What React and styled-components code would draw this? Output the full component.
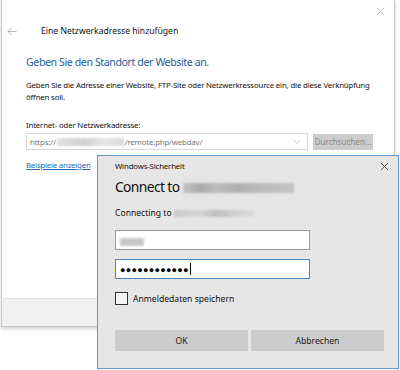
import styled, { createGlobalStyle } from "styled-components";

const Global = createGlobalStyle`
  html, body {
    margin: 0;
    padding: 0;
    background: #ffffff;
  }
  body {
    width: 400px;
    height: 370px;
    overflow: hidden;
    font-family: "Noto Sans", "Open Sans", sans-serif;
    color: #1a1a1a;
  }
`;

const Desktop = styled.div`
  position: relative;
  width: 400px;
  height: 370px;
  background: #ffffff;
`;

const Wizard = styled.div`
  position: absolute;
  left: 1px;
  top: -1px;
  width: 392px;
  height: 326px;
  background: #ffffff;
  border: 1px solid #c8c8c8;
  box-shadow: 0 2px 4px rgba(0, 0, 0, 0.18);
  display: flex;
  flex-direction: column;
`;

const WizardHead = styled.div`
  display: flex;
  align-items: center;
  height: 20px;
  padding: 21px 0 0 5px;
  gap: 24px;
  font-size: 8.6px;
  color: #111;
`;

const CloseX = styled.div`
  position: absolute;
  right: ${(p) => p.$right}px;
  top: ${(p) => p.$top}px;
  width: 10px;
  height: 10px;
  color: ${(p) => p.$color};
  svg { display: block; }
`;

const WizardBody = styled.div`
  flex: 1;
  padding: 0 0 0 24px;
  display: flex;
  flex-direction: column;
`;

const Heading = styled.div`
  margin-top: 14px;
  font-size: 10.6px;
  letter-spacing: -0.4px;
  color: #1f5c9e;
`;

const Desc = styled.div`
  margin-top: 11px;
  font-size: 7.8px;
  letter-spacing: -0.15px;
  line-height: 11.5px;
  white-space: nowrap;
  color: #111;
`;

const FieldLabel = styled.div`
  margin-top: 17px;
  font-size: 7.8px;
  letter-spacing: -0.15px;
  color: #111;
`;

const AddrRow = styled.div`
  margin-top: 3px;
  display: flex;
  gap: 5px;
  align-items: center;
`;

const AddrBox = styled.div`
  width: 277px;
  height: 15px;
  border: 1px solid #d6d6d6;
  display: flex;
  align-items: center;
  padding-left: 3px;
  font-size: 7.8px;
  letter-spacing: -0.15px;
  color: #777;
  position: relative;
`;

const Blur = styled.span`
  display: inline-block;
  flex: none;
  width: ${(p) => p.$w}px;
  height: ${(p) => p.$h}px;
  background: ${(p) => p.$bg};
  filter: blur(0.8px);
  margin: ${(p) => p.$m || "0"};
`;

const Chevron = styled.span`
  position: absolute;
  right: 6px;
  top: 5px;
  svg { display: block; }
`;

const Browse = styled.div`
  width: 60px;
  height: 16px;
  background: #cccccc;
  color: #8a8a8a;
  font-size: 8.1px;
  display: flex;
  align-items: center;
  justify-content: center;
`;

const Link = styled.div`
  margin-top: 10px;
  font-size: 7.8px;
  letter-spacing: -0.2px;
  color: #2a6ab0;
  text-decoration: underline;
`;

const WizardFoot = styled.div`
  height: 27px;
  background: #f0f0f0;
  border-top: 1px solid #e4e4e4;
`;

const Security = styled.div`
  position: absolute;
  left: 97px;
  top: 155px;
  width: 302px;
  height: 214px;
  box-sizing: border-box;
  background: #e6e6e6;
  border: 1px solid #5b9bd0;
  padding: 0 0 0 17px;
  display: flex;
  flex-direction: column;
`;

const SecTitle = styled.div`
  margin-top: 5px;
  font-size: 7.8px;
  letter-spacing: -0.15px;
  color: #111;
`;

const Connect = styled.div`
  margin-top: 6px;
  display: flex;
  align-items: center;
  font-size: 13.8px;
  letter-spacing: -0.6px;
  color: #111;
`;

const Connecting = styled.div`
  margin-top: 11px;
  display: flex;
  align-items: center;
  font-size: 8.6px;
  color: #111;
`;

const Input = styled.div`
  margin-top: ${(p) => p.$mt}px;
  width: 195px;
  height: 20px;
  box-sizing: border-box;
  background: #ffffff;
  border: 1px solid ${(p) => (p.$focus ? "#4a85bd" : "#9a9a9a")};
  display: flex;
  align-items: center;
  padding-left: 4px;
`;

const Dots = styled.span`
  font-size: 9px;
  letter-spacing: 0.3px;
  color: #000;
  line-height: 1;
`;

const Caret = styled.span`
  width: 1px;
  height: 12px;
  background: #000;
  margin-left: 1px;
`;

const CheckRow = styled.div`
  margin-top: 13px;
  display: flex;
  align-items: center;
  gap: 5px;
  font-size: 8.6px;
  color: #111;
`;

const Box = styled.span`
  width: 13px;
  height: 13px;
  box-sizing: border-box;
  border: 1px solid #333;
  background: #f4f4f4;
`;

const Buttons = styled.div`
  margin-top: 25px;
  display: flex;
  gap: 3px;
`;

const Button = styled.div`
  width: 133px;
  height: 21px;
  background: #cccccc;
  font-size: 8.6px;
  color: #222;
  display: flex;
  align-items: center;
  justify-content: center;
`;

const X = ({ size = 9, stroke = 1 }) => (
  <svg width={size} height={size} viewBox="0 0 10 10">
    <path d="M1 1 L9 9 M9 1 L1 9" stroke="currentColor" strokeWidth={stroke} fill="none" />
  </svg>
);

export default function App() {
  return (
    <Desktop>
      <Global />
      <Wizard>
        <CloseX $right={8} $top={7} $color="#b5b5b5">
          <X size={9} stroke={0.9} />
        </CloseX>
        <WizardHead>
          <svg width="10" height="9" viewBox="0 0 10 9">
            <path d="M9.5 4.5 H1 M4.5 1 L1 4.5 L4.5 8" stroke="#b0b0b0" strokeWidth="0.9" fill="none" />
          </svg>
          <span>Eine Netzwerkadresse hinzufügen</span>
        </WizardHead>
        <WizardBody>
          <Heading>Geben Sie den Standort der Website an.</Heading>
          <Desc>
            Geben Sie die Adresse einer Website, FTP-Site oder Netzwerkressource ein, die diese Verknüpfung
            <br />
            öffnen soll.
          </Desc>
          <FieldLabel>Internet- oder Netzwerkadresse:</FieldLabel>
          <AddrRow>
            <AddrBox>
              https://
              <Blur $w={67} $h={8} $bg="linear-gradient(90deg,#e2e2e2,#d0d0d0 40%,#e6e6e6 70%,#d8d8d8)" $m="0 1px" />
              /remote.php/webdav/
              <Chevron>
                <svg width="8" height="6" viewBox="0 0 8 6">
                  <path d="M1 1.5 L4 4.5 L7 1.5" stroke="#b8b8b8" strokeWidth="0.9" fill="none" />
                </svg>
              </Chevron>
            </AddrBox>
            <Browse>Durchsuchen...</Browse>
          </AddrRow>
          <Link>Beispiele anzeigen</Link>
        </WizardBody>
        <WizardFoot />
      </Wizard>

      <Security>
        <CloseX $right={8} $top={6} $color="#444">
          <X size={9} stroke={1} />
        </CloseX>
        <SecTitle>Windows-Sicherheit</SecTitle>
        <Connect>
          Connect to
          <Blur
            $w={111}
            $h={10}
            $bg="linear-gradient(90deg,#c6c6c6,#a9a9a9 15%,#bdbdbd 30%,#b0b0b0 50%,#bcbcbc 70%,#c4c4c4)"
            $m="3px 0 0 4px"
          />
        </Connect>
        <Connecting>
          Connecting to
          <Blur
            $w={80}
            $h={7}
            $bg="linear-gradient(90deg,#c8c8c8,#d6d6d6 30%,#bebebe 55%,#d4d4d4 80%,#dcdcdc)"
            $m="1px 0 0 2px"
          />
        </Connecting>
        <Input $mt={11}>
          <Blur $w={24} $h={8} $bg="#c9c9c9" $m="3px 0 0 0" />
        </Input>
        <Input $mt={9} $focus>
          <Dots>●●●●●●●●●●●●</Dots>
          <Caret />
        </Input>
        <CheckRow>
          <Box />
          Anmeldedaten speichern
        </CheckRow>
        <Buttons>
          <Button>OK</Button>
          <Button>Abbrechen</Button>
        </Buttons>
      </Security>
    </Desktop>
  );
}
